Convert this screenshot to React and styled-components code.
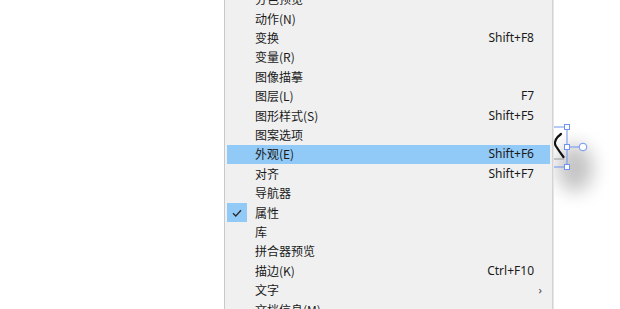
import React from "react";
import styled, { createGlobalStyle } from "styled-components";

const GlobalStyle = createGlobalStyle`
  html, body {
    margin: 0;
    padding: 0;
    background: #ffffff;
    overflow: hidden;
  }
`;

const Page = styled.div`
  display: flex;
  width: 620px;
  height: 309px;
  overflow: hidden;
  background: #ffffff;
`;

const LeftCanvas = styled.div`
  width: 224px;
  flex-shrink: 0;
`;

const Menu = styled.ul`
  position: relative;
  z-index: 1;
  list-style: none;
  margin: -10.4px 0 0 0;
  padding: 0 2px;
  width: 323px;
  flex-shrink: 0;
  background: #f0f0f0;
  border-left: 1px solid #c9c9c9;
  border-right: 1px solid #d3d3d3;
  box-shadow: 1px 0 0 #e6e6e6;
  font-family: "Noto Sans", "Noto Sans CJK SC", sans-serif;
  font-size: 12px;
  color: #1a1a1a;
  height: 340px;
`;

const Item = styled.li`
  position: relative;
  display: flex;
  align-items: center;
  height: 19.4px;
  padding: 0 16px 0 28px;
  background: ${p => (p.$active ? "#91c9f7" : "transparent")};
`;

const Label = styled.span`
  flex: 1;
  font-family: "Noto Sans CJK SC", sans-serif;
  line-height: 1;
`;

const Shortcut = styled.span`
  font-family: "Noto Sans", "Liberation Sans", sans-serif;
  font-size: 12px;
  line-height: 1;
`;

const Arrow = styled.span`
  position: absolute;
  right: 8px;
  top: 2px;
  font-size: 11px;
  color: #444;
`;

const CheckBox = styled.span`
  position: absolute;
  left: 0;
  top: 0;
  width: 20px;
  height: 19.4px;
  background: #91c9f7;
  display: flex;
  align-items: center;
  justify-content: center;
`;

const Canvas = styled.div`
  position: relative;
  flex: 1;
`;

const Artwork = styled.svg`
  position: absolute;
  left: -20px;
  top: 110px;
  overflow: visible;
`;

const items = [
  { label: "分色预览" },
  { label: "动作(N)" },
  { label: "变换", key: "Shift+F8" },
  { label: "变量(R)" },
  { label: "图像描摹" },
  { label: "图层(L)", key: "F7" },
  { label: "图形样式(S)", key: "Shift+F5" },
  { label: "图案选项" },
  { label: "外观(E)", key: "Shift+F6", active: true },
  { label: "对齐", key: "Shift+F7" },
  { label: "导航器" },
  { label: "属性", checked: true },
  { label: "库" },
  { label: "拼合器预览" },
  { label: "描边(K)", key: "Ctrl+F10" },
  { label: "文字", sub: true },
  { label: "文档信息(M)" }
];

const Check = () => (
  <svg width="10" height="8" viewBox="0 0 10 8">
    <path d="M1 4.2 L3.8 7 L9 1.2" fill="none" stroke="#2b2b2b" strokeWidth="1.3" />
  </svg>
);

export default function App() {
  return (
    <>
      <GlobalStyle />
      <Page>
        <LeftCanvas />
        <Menu>
          {items.map(item => (
            <Item key={item.label} $active={item.active}>
              {item.checked ? (
                <CheckBox>
                  <Check />
                </CheckBox>
              ) : null}
              <Label>{item.label}</Label>
              {item.key ? <Shortcut>{item.key}</Shortcut> : null}
              {item.sub ? <Arrow>›</Arrow> : null}
            </Item>
          ))}
        </Menu>
        <Canvas>
          <Artwork width="90" height="100" viewBox="0 0 90 100">
            <defs>
              <filter id="blur" x="-50%" y="-50%" width="200%" height="200%">
                <feGaussianBlur stdDeviation="9" />
              </filter>
            </defs>
            <ellipse cx="42" cy="58" rx="18" ry="24" fill="#8a8a8a" opacity="0.5" filter="url(#blur)" />
            <path d="M28 24 Q20 30 22.5 35.5 Q26 41 30.5 47" fill="none" stroke="#111" strokeWidth="2.2" strokeLinecap="round" />
            <line x1="0" y1="49" x2="31" y2="49" stroke="#9a9a9a" strokeWidth="1" />
            <line x1="0" y1="17" x2="34" y2="17" stroke="#6f93f0" strokeWidth="1" />
            <line x1="0" y1="57" x2="34" y2="57" stroke="#6f93f0" strokeWidth="1" />
            <line x1="34" y1="17" x2="34" y2="57" stroke="#6f93f0" strokeWidth="1" />
            <line x1="34" y1="37" x2="46" y2="37" stroke="#6f93f0" strokeWidth="1" />
            <rect x="31.5" y="14.5" width="5" height="5" fill="#fff" stroke="#6f93f0" />
            <rect x="31.5" y="34.5" width="5" height="5" fill="#fff" stroke="#6f93f0" />
            <rect x="31.5" y="54.5" width="5" height="5" fill="#fff" stroke="#6f93f0" />
            <circle cx="50" cy="37" r="3.8" fill="#fff" stroke="#6f93f0" />
          </Artwork>
        </Canvas>
      </Page>
    </>
  );
}
